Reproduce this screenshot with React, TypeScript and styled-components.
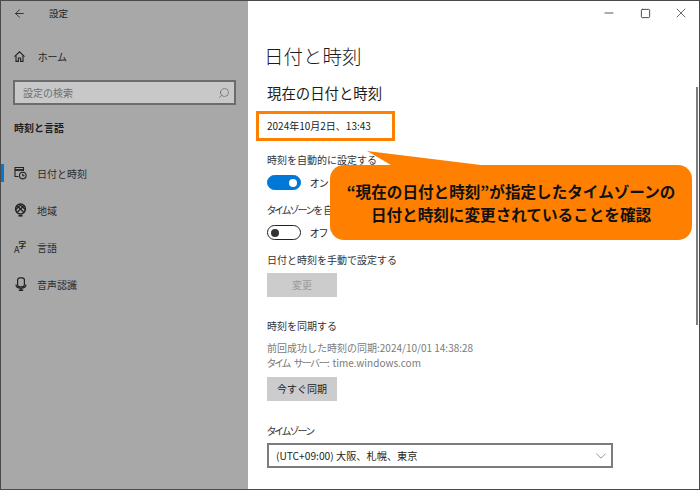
import styled, { createGlobalStyle } from 'styled-components';
import { ArrowLeft, ChevronDown, Minus, Search, Square, X } from 'lucide-react';

const GlobalStyle = createGlobalStyle`
  html, body {
    margin: 0;
    padding: 0;
    background: #fff;
  }
  body {
    font-family: 'Noto Sans CJK JP', 'Noto Sans', sans-serif;
  }
`;

const navItems = [
  { label: '日付と時刻', icon: 'clock', active: true },
  { label: '地域', icon: 'globe' },
  { label: '言語', icon: 'lang' },
  { label: '音声認識', icon: 'mic' },
];

const NavIcon = ({ name }: { name: string }) => {
  if (name === 'clock') {
    return (
      <svg width="13" height="14" viewBox="0 0 13 14" fill="none" stroke="#222" strokeWidth="1.1">
        <path d="M4.5 10.5H1V1.5h8.5V5" />
        <path d="M1 4h8.5" strokeWidth="1.8" />
        <circle cx="8.8" cy="9.6" r="3.3" fill="#a8a8a8" />
        <path d="M8.8 7.8v2h1.7" />
      </svg>
    );
  }
  if (name === 'globe') {
    return (
      <svg width="13" height="14" viewBox="0 0 13 14" fill="none" stroke="#222" strokeWidth="1.2">
        <circle cx="6.5" cy="6" r="4.9" strokeWidth="1.5" />
        <path d="M3.2 2.8l6.6 6.4M9.8 2.8L3.2 9.2M1.8 6.5L6.5 2l4.7 4.5" />
        <path d="M4.5 12.8h4" strokeWidth="1.6" />
      </svg>
    );
  }
  if (name === 'lang') {
    return (
      <LangGlyph>
        A<b>字</b>
      </LangGlyph>
    );
  }
  return (
    <svg width="12" height="14" viewBox="0 0 12 14" fill="none" stroke="#222" strokeWidth="1.2">
      <rect x="2.6" y="0.8" width="6.8" height="9" rx="2.2" />
      <path d="M1 7.6c0 2.6 1.8 3.6 5 3.6s5-1 5-3.6" />
      <path d="M6 11v2M3.8 13.2h4.4" strokeWidth="1.4" />
    </svg>
  );
};

export default function App() {
  return (
    <Page>
      <GlobalStyle />
      <Sidebar>
        <BackRow>
          <ArrowLeft size={13} color="#111" strokeWidth={1.4} />
          <span>設定</span>
        </BackRow>
        <HomeRow>
          <svg width="11" height="11" viewBox="0 0 11 11" fill="none" stroke="#222" strokeWidth="1.1">
            <path d="M0.5 5.6L5.5 0.8l5 4.8" />
            <path d="M2 4.4v6h2.4V7h2.2v3.4H9v-6" />
          </svg>
          <Kana>ホーム</Kana>
        </HomeRow>
        <SearchBox>
          <span>設定の検索</span>
          <Search size={12} color="#555" strokeWidth={1.2} style={{ transform: 'scaleX(-1)' }} />
        </SearchBox>
        <GroupTitle>時刻と言語</GroupTitle>
        <NavList>
          {navItems.map((item) => (
            <NavItem key={item.label} $active={item.active}>
              <NavIconSlot>
                <NavIcon name={item.icon} />
              </NavIconSlot>
              {item.label}
            </NavItem>
          ))}
        </NavList>
      </Sidebar>
      <Main>
        <WindowControls>
          <ControlCell>
            <Minus size={14} color="#333" strokeWidth={1.4} />
          </ControlCell>
          <ControlCell>
            <Square size={11} color="#333" strokeWidth={1.9} />
          </ControlCell>
          <ControlCell>
            <X size={16} color="#333" strokeWidth={1.1} />
          </ControlCell>
        </WindowControls>
        <Title>日付と時刻</Title>
        <Subtitle>現在の日付と時刻</Subtitle>
        <DateBox>2024年10月2日、13:43</DateBox>
        <Label $top={12}>時刻を自動的に設定する</Label>
        <ToggleRow>
          <Toggle $on>
            <Knob $on />
          </Toggle>
          <Kana>オン</Kana>
        </ToggleRow>
        <Label $top={13}>
          <TightKana>タイムゾーン</TightKana>を自動的に設定する
        </Label>
        <ToggleRow>
          <Toggle>
            <Knob />
          </Toggle>
          <Kana>オフ</Kana>
        </ToggleRow>
        <Label $top={13}>日付と時刻を手動で設定する</Label>
        <Button $disabled $top={6}>
          変更
        </Button>
        <Label $top={22}>時刻を同期する</Label>
        <SyncInfo>
          前回成功した時刻の同期:2024/10/01 14:38:28
          <br />
          <TightKana>{'タイム サーバー: '}</TightKana>time.windows.com
        </SyncInfo>
        <Button $top={7}>今すぐ同期</Button>
        <Label $top={23}>
          <TightKana>タイムゾーン</TightKana>
        </Label>
        <Select>
          (UTC+09:00) 大阪、札幌、東京
          <ChevronDown size={18} color="#666" strokeWidth={0.9} />
        </Select>
        <Scrollbar />
      </Main>
      <Callout>
        <CalloutTail width="120" height="16" viewBox="0 0 120 16">
          <path d="M0 0L24 14V16H114V14Z" fill="#ff8000" />
        </CalloutTail>
        “現在の日付と時刻”が指定したタイムゾーンの
        <br />
        日付と時刻に変更されていることを確認
      </Callout>
    </Page>
  );
}

const Page = styled.div`
  position: relative;
  display: flex;
  box-sizing: border-box;
  width: 700px;
  height: 490px;
  overflow: hidden;
  border: 1px solid #4a4a4a;
  color: #1c1c1c;
`;

const Kana = styled.span`
  font-feature-settings: 'palt';
`;

const TightKana = styled(Kana)`
  letter-spacing: -1.3px;
  word-spacing: 3px;
`;

const Sidebar = styled.aside`
  width: 247px;
  flex-shrink: 0;
  background: #a8a8a8;
  color: #1e1e1e;
  font-size: 10px;
`;

const BackRow = styled.div`
  display: flex;
  align-items: center;
  gap: 23px;
  height: 24px;
  padding-left: 12px;
  font-size: 9.5px;
`;

const HomeRow = styled.div`
  display: flex;
  align-items: center;
  gap: 13px;
  height: 24px;
  margin-top: 19px;
  padding-left: 13px;
`;

const SearchBox = styled.div`
  display: flex;
  align-items: center;
  justify-content: space-between;
  box-sizing: border-box;
  width: 223px;
  height: 25px;
  margin: 12px 0 0 12px;
  padding: 0 4px 0 8px;
  background: #c8c8c8;
  border: 2px solid #6c6c6c;
  color: #6e6e6e;
`;

const GroupTitle = styled.div`
  margin: 15px 0 0 13px;
  font-size: 10px;
  font-weight: 700;
  line-height: 16px;
`;

const NavList = styled.div`
  display: flex;
  flex-direction: column;
  gap: 19px;
  margin-top: 28px;
`;

const NavItem = styled.div<{ $active?: boolean }>`
  display: flex;
  align-items: center;
  height: 18px;
  color: #2a2a2a;
  border-left: 3px solid ${(p) => (p.$active ? '#0078d7' : 'transparent')};
`;

const NavIconSlot = styled.span`
  display: flex;
  justify-content: center;
  width: 13px;
  margin: 0 10px 0 10px;
`;

const LangGlyph = styled.span`
  display: flex;
  width: 13px;
  height: 13px;
  font-size: 9px;
  line-height: 9px;
  color: #222;
  align-items: flex-end;

  b {
    align-self: flex-start;
    margin-left: -1px;
    font-size: 7.5px;
    line-height: 8px;
  }
`;

const Main = styled.main`
  position: relative;
  flex: 1;
  padding-left: 19px;
  background: #fff;
  font-size: 10px;
`;

const WindowControls = styled.div`
  display: flex;
  justify-content: flex-end;
  height: 24px;
`;

const ControlCell = styled.span`
  display: flex;
  align-items: center;
  justify-content: center;
  width: 36px;
`;

const Title = styled.h1`
  margin: 16px 0 0 -3px;
  font-size: 19.5px;
  font-weight: 300;
  line-height: 30px;
`;

const Subtitle = styled.h2`
  margin: 12px 0 0;
  font-size: 14.4px;
  font-weight: 400;
  line-height: 20px;
`;

const DateBox = styled.div`
  box-sizing: border-box;
  width: 139px;
  height: 30px;
  margin: 8px 0 0 -11px;
  padding-left: 8px;
  border: 3px solid #ff8000;
  line-height: 24px;
`;

const Label = styled.div<{ $top: number }>`
  margin-top: ${(p) => p.$top}px;
  line-height: 14px;
  color: #333;
`;

const ToggleRow = styled.div`
  display: flex;
  align-items: center;
  gap: 9px;
  height: 15px;
  margin-top: 8px;
`;

const Toggle = styled.span<{ $on?: boolean }>`
  display: flex;
  align-items: center;
  justify-content: ${(p) => (p.$on ? 'flex-end' : 'flex-start')};
  box-sizing: border-box;
  width: 34px;
  height: 15px;
  padding: 0 3px;
  border-radius: 8px;
  background: ${(p) => (p.$on ? '#0078d7' : '#fff')};
  border: 1.5px solid ${(p) => (p.$on ? '#0078d7' : '#222')};
`;

const Knob = styled.span<{ $on?: boolean }>`
  width: 8px;
  height: 8px;
  border-radius: 50%;
  background: ${(p) => (p.$on ? '#fff' : '#333')};
`;

const Button = styled.div<{ $disabled?: boolean; $top: number }>`
  width: 70px;
  height: 24px;
  margin-top: ${(p) => p.$top}px;
  background: #cccccc;
  color: ${(p) => (p.$disabled ? '#9a9a9a' : '#222')};
  text-align: center;
  line-height: 24px;
`;

const SyncInfo = styled.div`
  margin-top: 7px;
  line-height: 15px;
  color: #7a7a7a;
`;

const Select = styled.div`
  display: flex;
  align-items: center;
  justify-content: space-between;
  box-sizing: border-box;
  width: 346px;
  height: 25px;
  margin-top: 5px;
  padding: 0 1px 0 7px;
  border: 2px solid #7c7c7c;
  font-size: 10.2px;
`;

const Scrollbar = styled.div`
  position: absolute;
  top: 86px;
  right: 1px;
  width: 2px;
  height: 238px;
  background: #7d7d7d;
`;

const Callout = styled.div`
  position: absolute;
  top: 164px;
  left: 329px;
  box-sizing: border-box;
  width: 362px;
  height: 75px;
  padding-top: 15px;
  border-radius: 14px;
  background: #ff8000;
  color: #111;
  font-size: 15.6px;
  font-weight: 700;
  line-height: 23px;
  text-align: center;
`;

const CalloutTail = styled.svg`
  position: absolute;
  top: -14px;
  left: 37px;
`;
